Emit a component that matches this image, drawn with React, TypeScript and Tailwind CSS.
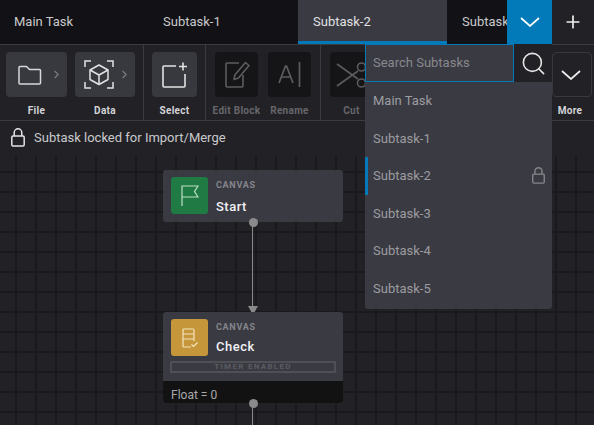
import { ChevronRight, Plus, Search } from "lucide-react";

const tabs = ["Main Task", "Subtask-1", "Subtask-2", "Subtask-3"];
const subtasks = ["Main Task", "Subtask-1", "Subtask-2", "Subtask-3", "Subtask-4", "Subtask-5"];

function LockIcon({ className }: { className?: string }) {
  return (
    <svg className={className} viewBox="0 0 14 19" fill="none" stroke="currentColor" strokeWidth={1.5} preserveAspectRatio="none">
      <rect x="0.8" y="8" width="12.4" height="10" rx="1.2" />
      <path d="M3.2 8V4.6a3.8 3.8 0 0 1 7.6 0V8" />
    </svg>
  );
}

function WideChevron({ className }: { className?: string }) {
  return (
    <svg className={className} viewBox="0 0 20 10" fill="none" stroke="currentColor" strokeWidth={1.7}>
      <path d="M1 1l9 8 9-8" />
    </svg>
  );
}

function FolderIcon() {
  return (
    <svg className="w-6 h-5" viewBox="0 0 24 20" fill="none" stroke="#d8d8da" strokeWidth={1.5} strokeLinejoin="round">
      <path d="M1 2.5a1 1 0 0 1 1-1h6.5l3 3h10a1 1 0 0 1 1 1V18a1 1 0 0 1-1 1H2a1 1 0 0 1-1-1z" />
    </svg>
  );
}

function DataIcon() {
  return (
    <svg className="w-[30px] h-[29px]" viewBox="0 0 30 29" fill="none" stroke="#e2e2e4" strokeWidth={1.5}>
      <path d="M1 7V1h6M23 1h6v6M29 22v6h-6M7 28H1v-6" />
      <path d="M15 5l9 5v9.500l-9 5-9-5V10z" strokeLinejoin="round" />
      <path d="M6 10l9 5 9-5M15 15v9.500" strokeLinejoin="round" />
    </svg>
  );
}

function SelectIcon() {
  return (
    <svg className="w-[26px] h-[26px]" viewBox="0 0 26 26" fill="none" stroke="#e2e2e4" strokeWidth={1.6}>
      <path d="M14 4H2a1 1 0 0 0-1 1v19a1 1 0 0 0 1 1h20a1 1 0 0 0 1-1V12" />
      <path d="M21 0.500v8M17 4.500h8" />
    </svg>
  );
}

function EditIcon() {
  return (
    <svg className="w-[26px] h-[27px]" viewBox="0 0 26 27" fill="none" stroke="#5c5c60" strokeWidth={1.6} strokeLinejoin="round">
      <path d="M15 2H3a1 1 0 0 0-1 1v22a1 1 0 0 0 1 1h15a1 1 0 0 0 1-1V14" />
      <path d="M21.500 1.500l3.500 3L14.500 17l-4.500 1.500.8-4.500z" />
    </svg>
  );
}

function RenameIcon() {
  return (
    <svg className="w-[23px] h-[25px]" viewBox="0 0 23 25" fill="none" stroke="#5c5c60" strokeWidth={1.7}>
      <path d="M1 21L7.500 4h1L15 21M3.500 15h9.500" />
      <path d="M21.500 0v25" />
    </svg>
  );
}

function ScissorsIcon() {
  return (
    <svg className="w-[31px] h-[26px]" viewBox="0 0 31 26" fill="none" stroke="#5c5c60" strokeWidth={1.6}>
      <circle cx="25.500" cy="5" r="4" />
      <circle cx="25.500" cy="21" r="4" />
      <path d="M1 2l21 15M1 24L22 9" />
    </svg>
  );
}

function FlagIcon() {
  return (
    <svg className="w-[18px] h-[21px]" viewBox="0 0 18 21" fill="none" stroke="#bfe0c8" strokeWidth={1.2}>
      <path d="M1 21V1h16l-3.500 5.500L17 12H1" />
    </svg>
  );
}

function CheckIcon() {
  return (
    <svg className="w-[16px] h-[20px]" viewBox="0 0 16 20" fill="none" stroke="#f4e3bd" strokeWidth={1.2}>
      <path d="M9 19H2a1 1 0 0 1-1-1V2a1 1 0 0 1 1-1h9a1 1 0 0 1 1 1v11" />
      <path d="M1 6h11M1 11h11" />
      <path d="M9.500 16.500l2 2 4-4" />
    </svg>
  );
}

function ToolButton({ label, icon, arrow, width, disabled }: { label: string; icon: React.ReactNode; arrow?: boolean; width: string; disabled?: boolean }) {
  return (
    <div className={`flex flex-col items-center ${width}`}>
      <div className={`relative flex h-[45px] w-full items-center justify-center rounded-[4px] ${disabled ? "bg-[#151518]" : "bg-[#38383f]"} ${arrow ? "pr-[13px]" : ""}`}>
        {icon}
        {arrow && <ChevronRight className="absolute right-[4px] top-[16px] h-[13px] w-[13px] text-[#7d7d82]" strokeWidth={2} />}
      </div>
      <span className={`mt-[7px] whitespace-nowrap text-[10px] font-bold leading-[14px] tracking-[0.3px] ${disabled ? "text-[#66666b]" : "text-[#d4d4d8]"}`}>{label}</span>
    </div>
  );
}

function NodeHead({ icon, color, title, gap }: { icon: React.ReactNode; color: string; title: string; gap: string }) {
  return (
    <div className="flex pl-2 pt-[7px]">
      <div className={`flex h-[37px] w-[37px] items-center justify-center rounded-[3px] ${color}`}>{icon}</div>
      <div className="ml-2 flex flex-col pt-[3px]">
        <span className="text-[9px] font-bold leading-[11px] tracking-[0.7px] text-[#85858c]">CANVAS</span>
        <span className={`text-[13px] font-medium leading-[16px] tracking-[0.5px] text-[#f0f1f4] ${gap}`}>{title}</span>
      </div>
    </div>
  );
}

function Dot({ className }: { className: string }) {
  return <div className={`absolute left-[86px] h-[9px] w-[9px] rounded-full bg-[#8a8a8c] ${className}`} />;
}

export default function App() {
  return (
    <div className="relative h-[425px] w-[594px] overflow-hidden bg-[#222226] font-['Roboto',sans-serif]">
      {/* tab strip */}
      <div className="flex h-[45px] border-b border-[#3b3b40]">
        <div className="flex w-[507px] overflow-hidden bg-[#121216]">
          {tabs.map((tab, i) => (
            <div
              key={tab}
              className={`flex h-[44px] w-[149px] shrink-0 items-center text-[13px] ${i < 2 ? "pl-[14px]" : "pl-[15px]"} ${i === 2 ? "border-b-[3px] border-[#0279b8] bg-[#3a3a42] pt-[3px] text-[#e0e0e2]" : "text-[#c9c9cc]"}`}
            >
              {tab}
            </div>
          ))}
        </div>
        <div className="flex h-[44px] w-[45px] items-center justify-center bg-[#0279b8]">
          <WideChevron className="h-[10px] w-[20px] text-white" />
        </div>
        <div className="flex h-[44px] w-[42px] items-center justify-center">
          <Plus className="h-[20px] w-[20px] text-[#f0f0f0]" strokeWidth={2} />
        </div>
      </div>

      {/* toolbar */}
      <div className="flex h-[76px] border-b border-[#3b3b40]">
        <div className="flex w-[144px] gap-2 border-r border-[#3b3b40] pl-[6px] pt-[7px]">
          <ToolButton label="File" icon={<FolderIcon />} arrow width="w-[61px]" />
          <ToolButton label="Data" icon={<DataIcon />} arrow width="w-[60px]" />
        </div>
        <div className="flex w-[62px] justify-center border-r border-[#3b3b40] pt-[7px]">
          <ToolButton label="Select" icon={<SelectIcon />} width="w-[45px]" />
        </div>
        <div className="flex w-[115px] gap-[10px] border-r border-[#3b3b40] pl-[9px] pt-[7px]">
          <ToolButton label="Edit Block" icon={<EditIcon />} width="w-[43px]" disabled />
          <ToolButton label="Rename" icon={<RenameIcon />} width="w-[43px]" disabled />
        </div>
        <div className="flex w-[60px] pl-[9px] pt-[7px]">
          <ToolButton label="Cut" icon={<ScissorsIcon />} width="w-[43px]" disabled />
        </div>
        <div className="ml-auto mr-[2px] flex w-[40px] flex-col items-center pt-[7px]">
          <div className="flex h-[45px] w-full items-center justify-center rounded-[4px] border border-[#38383f] pr-[2px]">
            <WideChevron className="h-[10px] w-[20px] text-[#eeeeee]" />
          </div>
          <span className="mr-[4px] mt-[7px] text-[10px] font-bold leading-[14px] tracking-[0.3px] text-[#d4d4d8]">More</span>
        </div>
      </div>

      {/* lock notice */}
      <div className="flex h-[35px] items-center gap-[9px] pb-[2px] pl-[11px]">
        <LockIcon className="h-[19px] w-[14px] text-[#e4e4e6]" />
        <span className="text-[13px] text-[#c9c9cc]">Subtask locked for Import/Merge</span>
      </div>

      {/* canvas */}
      <div className="relative h-[269px] bg-[linear-gradient(#1a1a1c_2px,transparent_2px),linear-gradient(90deg,#1a1a1c_2px,transparent_2px)] bg-[size:20px_20px] bg-[position:15px_15px]">
        <div className="absolute left-[252px] top-[66px] h-[86px] w-px bg-[#8a8a8c]" />
        <div className="absolute left-[248px] top-[150px] h-0 w-0 border-x-[5px] border-t-[9px] border-x-transparent border-t-[#8a8a8c]" />
        <div className="absolute left-[252px] top-[248px] h-[21px] w-px bg-[#8a8a8c]" />

        <div className="absolute left-[163px] top-[14px] h-[52px] w-[180px] rounded-[3px] bg-[#3a3a42]">
          <NodeHead icon={<FlagIcon />} color="bg-[#1f7a43]" title="Start" gap="mt-[8px]" />
          <Dot className="top-[48px]" />
        </div>

        <div className="absolute left-[163px] top-[156px] h-[91px] w-[180px] overflow-visible rounded-[3px] bg-[#3a3a42]">
          <NodeHead icon={<CheckIcon />} color="bg-[#c6973a]" title="Check" gap="mt-[6px]" />
          <div className="mx-[7px] mt-[5px] flex h-[12px] items-center justify-center rounded-[1px] border-2 border-[#4f4f56] text-[8px] font-bold tracking-[1.3px] text-[#5c5c63]">
            TIMER ENABLED
          </div>
          <div className="absolute bottom-0 left-0 right-0 flex h-[22px] items-center rounded-b-[3px] bg-[#121212] pl-2 pt-[5px] text-[12px] text-[#a9a9ac]">
            Float = 0
          </div>
          <Dot className="top-[87px]" />
        </div>
      </div>

      {/* subtask dropdown */}
      <div className="absolute left-[365px] top-[44px] h-[265px] w-[187px] rounded-b-[3px] bg-[#3a3a42]">
        <div className="flex h-[38px]">
          <div className="flex w-[149px] items-center border border-[#0279b8] pl-[7px] text-[13px] text-[#88888d]">Search Subtasks</div>
          <div className="flex w-[38px] items-center justify-center bg-[#222226]">
            <Search className="h-[27px] w-[27px] text-[#e6e6e6]" strokeWidth={1.4} />
          </div>
        </div>
        {subtasks.map((item, i) => (
          <div key={item} className={`flex h-[37.5px] items-center justify-between pr-[7px] text-[13px] text-[#9c9ca0] ${i === 2 ? "border-l-[3px] border-[#0279b8] pl-[5px]" : "pl-2"}`}>
            {item}
            {i === 2 && <LockIcon className="h-[17px] w-[13px] text-[#85858a]" />}
          </div>
        ))}
      </div>
    </div>
  );
}
